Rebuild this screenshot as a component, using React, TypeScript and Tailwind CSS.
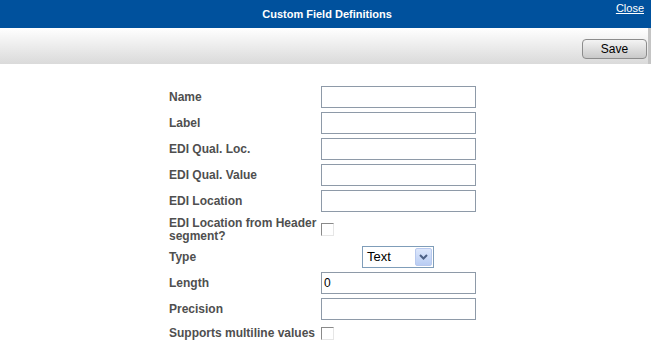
import type { ReactNode } from 'react';

const FONT = { fontFamily: '"Liberation Sans", Arial, sans-serif' };

function Field({ label, children }: { label: ReactNode; children: ReactNode }) {
  return (
    <div className="flex items-center h-[26px]">
      <div className="w-[152px] text-[12px] font-bold text-[#4f4f4f] leading-[14px]">{label}</div>
      {children}
    </div>
  );
}

function TextBox({ value = '' }: { value?: string }) {
  return (
    <div className="w-[155px] h-[22px] border border-[#8e9aa8] bg-white flex items-center px-[2px] text-[12px] text-black">
      {value}
    </div>
  );
}

function CheckBox() {
  return (
    <span className="block w-[13px] h-[13px] border-t border-l border-[#8a8a8a] border-r border-b border-r-[#e6e6e6] border-b-[#e6e6e6] bg-white" />
  );
}

export default function App() {
  return (
    <div className="w-[651px] h-[352px] bg-white overflow-hidden" style={FONT}>
      <div className="h-[28px] bg-[#00519d] flex items-center relative">
        <p className="m-0 w-full text-center text-white text-[11px] font-bold pl-[3px]">Custom Field Definitions</p>
        <a className="absolute right-[7px] top-[0px] text-white text-[11px] underline cursor-pointer">Close</a>
      </div>

      <div className="h-[36px] bg-gradient-to-b from-[#ffffff] to-[#dadada] border-r-[3px] border-r-[#c4c4c4] flex items-start justify-end pr-[1px] pt-[11px]">
        <button className="w-[65px] h-[20px] rounded-[4px] border border-[#8c8c8c] bg-gradient-to-b from-[#f4f4f4] to-[#c9c9c9] text-[12px] text-black leading-none">
          Save
        </button>
      </div>

      <div className="pl-[169px] pt-[20px] flex flex-col">
        <Field label="Name"><TextBox /></Field>
        <Field label="Label"><TextBox /></Field>
        <Field label="EDI Qual. Loc."><TextBox /></Field>
        <Field label="EDI Qual. Value"><TextBox /></Field>
        <Field label="EDI Location"><TextBox /></Field>

        <div className="flex items-start h-[30px] pt-[3px]">
          <div className="w-[152px] text-[12px] font-bold text-[#4f4f4f] leading-[13px]">
            EDI Location from Header segment?
          </div>
          <div className="pt-[6px]"><CheckBox /></div>
        </div>

        <Field label="Type">
          <div className="ml-[41px] w-[72px] h-[22px] border border-[#7f9db9] bg-white flex items-center justify-between pl-[4px] pr-[1px]">
            <span className="text-[13px] text-black">Text</span>
            <span className="w-[17px] h-[18px] rounded-[2px] border border-[#b8c9ee] bg-gradient-to-b from-[#dde7fb] to-[#b9cdf3] flex items-center justify-center">
              <svg width="9" height="6" viewBox="0 0 9 6">
                <path d="M1 1 L4.5 4.5 L8 1" stroke="#4d6185" strokeWidth="2" fill="none" />
              </svg>
            </span>
          </div>
        </Field>
        <Field label="Length"><TextBox value="0" /></Field>
        <Field label="Precision"><TextBox /></Field>

        <div className="flex items-center h-[22px]">
          <div className="w-[152px] text-[12px] font-bold text-[#4f4f4f] leading-[14px]">Supports multiline values</div>
          <CheckBox />
        </div>
      </div>
    </div>
  );
}
